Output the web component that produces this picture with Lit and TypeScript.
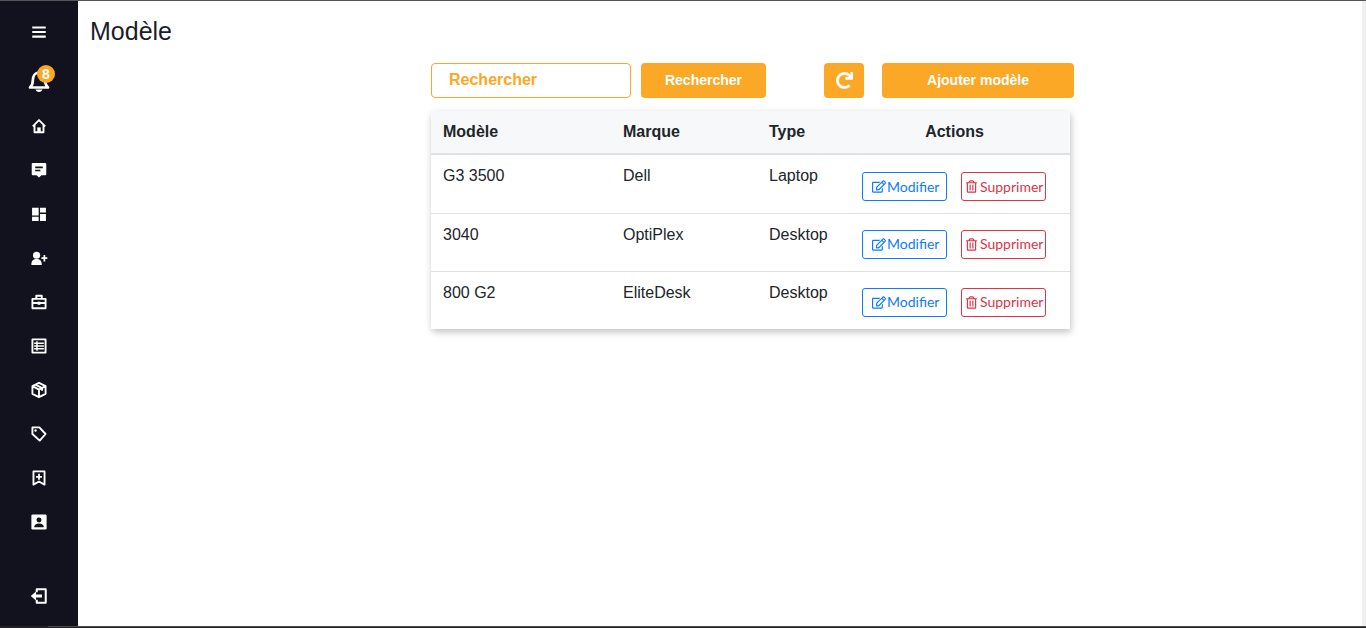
import { LitElement, css, html, svg } from 'lit';
import { customElement } from 'lit/decorators.js';

const icon = (body: unknown, size = 18, viewBox = '-1 -1 26 26') => html`
  <svg width=${size} height=${size} viewBox=${viewBox} fill="currentColor">${body}</svg>
`;

const outline = (d: string) => svg`<path d=${d} fill="none" stroke="currentColor" stroke-width="2.7" stroke-linejoin="round" />`;

const navIcons = [
  svg`<path d="M3 4.500h18v2.700H3zM3 10.700h18v2.700H3zM3 16.800h18v2.700H3z" />`,
  svg`${outline('M3 12.500 12 3.500l9 9M5.500 10v11h13V10')}<path d="M9.500 14h5v7h-5z" />`,
  svg`<path d="M3 2h18a1.500 1.500 0 0 1 1.500 1.500v14.500a1.500 1.500 0 0 1-1.500 1.500h-5.500L12 23l-3.500-3.500H3A1.500 1.500 0 0 1 1.500 18V3.500A1.500 1.500 0 0 1 3 2z" /><path d="M6.500 7h11v2.300h-11zM6.500 11.500h7.500v2.300H6.500z" fill="#11121e" />`,
  svg`<path d="M2 3h9.500v11H2zM13.500 3H22v7h-8.500zM2 16h9.500v6H2zM13.500 12H22v10h-8.500z" />`,
  svg`<circle cx="8.500" cy="8" r="5.200" /><path d="M1 21c0-5 3-7.500 7.500-7.500S16 16 16 21v1H1zM18.500 7.500h2.500V11h3v2.500h-3V17h-2.500v-3.500h-3V11h3z" />`,
  svg`${outline('M2.500 7.500h19v13.500h-19zM8 7.500V3h8v4.500M2.500 13.500h19')}<path d="M10 11.500h4v4.500h-4z" />`,
  svg`${outline('M2.500 2.500h19v19h-19z')}<path d="M5 7h14v2.200H5zM5 11h14v2.200H5zM5 15h14v2.200H5zM8 5h2.200v14H8z" />`,
  svg`${outline('M12 1.800 21.500 6.500v11L12 22.200 2.500 17.500v-11zM2.500 6.500 12 11.500l9.500-5M12 11.500v10.500M7 4.200l9.500 5v4')}`,
  svg`${outline('M2.500 2.500h10l9 9.500-8.500 9.500-10.500-9.500z')}<circle cx="7" cy="7" r="1.700" />`,
  svg`${outline('M4 2.500h16v19l-8-4.500-8 4.500z')}<path d="M10.700 6h2.600v3h3v2.600h-3v3h-2.600v-3h-3V9h3z" />`,
  svg`<path d="M3 1h18a2 2 0 0 1 2 2v18a2 2 0 0 1-2 2H3a2 2 0 0 1-2-2V3a2 2 0 0 1 2-2z" /><circle cx="12" cy="9" r="3.600" fill="#11121e" /><path d="M5 19.500c0-3.500 3-5.500 7-5.500s7 2 7 5.500z" fill="#11121e" />`,
];

const bell = svg`${outline('M3 19.500c2-1.800 2.800-3.500 2.800-7 0-4.500 2.400-8 6.200-8s6.200 3.500 6.200 8c0 3.500.8 5.200 2.800 7z')}<path d="M8.500 21.500h7c-.5 1.500-1.800 2.400-3.500 2.400s-3-.9-3.500-2.400z" />`;

const logout = svg`${outline('M9 7V3h12v18H9v-4')}<path d="M1 12 8 6v4h8v4H8v4z" />`;

const refresh = svg`<path stroke="currentColor" stroke-width="14" d="M500.33 0h-47.41a12 12 0 0 0-12 12.570l4 82.760A247.420 247.420 0 0 0 256 8C119.340 8 8.900 119.530 8 256.190 7.100 393.070 117.680 504 256 504a247.100 247.100 0 0 0 166.180-63.910 12 12 0 0 0 .48-17.430l-34-34a12 12 0 0 0-16.380-.55A176 176 0 1 1 402.100 157.800l-101.530-4.870a12 12 0 0 0-12.570 12v47.410a12 12 0 0 0 12 12h200.330a12 12 0 0 0 12-12V12a12 12 0 0 0-12-12z" />`;

const editIcon = svg`<path d="M402.3 344.900l32-32c5-5 13.700-1.500 13.700 5.700V464c0 26.500-21.500 48-48 48H48c-26.500 0-48-21.500-48-48V112c0-26.500 21.500-48 48-48h273.500c7.100 0 10.700 8.600 5.700 13.700l-32 32c-1.500 1.500-3.500 2.300-5.700 2.300H48v352h352V350.500c0-2.100.8-4.100 2.300-5.600zm156.600-201.800L296.300 405.700l-90.400 10c-26.200 2.900-48.500-19.200-45.600-45.600l10-90.400L432.900 17.100c22.900-22.900 59.900-22.900 82.700 0l43.200 43.200c22.900 22.900 22.900 60 .1 82.800zM460.100 174L402 115.900 216.200 301.800l-7.300 65.300 65.300-7.300L460.100 174zm64.800-79.700l-43.200-43.200c-4.100-4.100-10.800-4.100-14.800 0L436 82l58.100 58.100 30.900-30.900c4-4.200 4-10.800-.1-14.900z" />`;

const trashIcon = svg`<path d="M268 416h24a12 12 0 0 0 12-12V188a12 12 0 0 0-12-12h-24a12 12 0 0 0-12 12v216a12 12 0 0 0 12 12zM432 80h-82.410l-34-56.700A48 48 0 0 0 274.410 0H173.590a48 48 0 0 0-41.160 23.300L98.410 80H16A16 16 0 0 0 0 96v16a16 16 0 0 0 16 16h16v336a48 48 0 0 0 48 48h288a48 48 0 0 0 48-48V128h16a16 16 0 0 0 16-16V96a16 16 0 0 0-16-16zM171.840 50.910A6 6 0 0 1 177 48h94a6 6 0 0 1 5.150 2.910L293.610 80H154.390zM368 464H80V128h288zm-212-48h24a12 12 0 0 0 12-12V188a12 12 0 0 0-12-12h-24a12 12 0 0 0-12 12v216a12 12 0 0 0 12 12z" />`;

const rows = [
  ['G3 3500', 'Dell', 'Laptop'],
  ['3040', 'OptiPlex', 'Desktop'],
  ['800 G2', 'EliteDesk', 'Desktop'],
];

@customElement('app-root')
export class AppRoot extends LitElement {
  static styles = css`
    :host {
      display: flex;
      flex-direction: column;
      height: 628px;
      overflow: hidden;
      background: #fff;
      color: #212529;
      font-family: 'Liberation Sans', Arial, sans-serif;
      border-top: 1px solid #555;
      box-sizing: border-box;
    }

    .frame {
      flex: 1;
      display: flex;
      min-height: 0;
    }

    .sidebar {
      width: 78px;
      flex: none;
      box-sizing: border-box;
      background: #11121e;
      color: #fff;
      display: flex;
      flex-direction: column;
      align-items: center;
      padding: 9px 0 8px;
    }

    .nav-item {
      position: relative;
      height: 44px;
      display: flex;
      align-items: center;
      justify-content: center;
    }

    .menu {
      margin-bottom: 6px;
    }

    .logout {
      margin-top: auto;
    }

    .badge {
      position: absolute;
      top: 5px;
      left: 10px;
      width: 18px;
      height: 18px;
      border-radius: 50%;
      background: #faa826;
      color: #fff;
      font-size: 14px;
      font-weight: 700;
      line-height: 18px;
      text-align: center;
    }

    .content {
      flex: 1;
      min-width: 0;
      padding: 16px 12px 0;
      border-right: 4px solid #f0f0f0;
    }

    h1 {
      margin: 0;
      font-size: 25px;
      font-weight: 400;
      line-height: 29px;
      color: #1c1c2b;
    }

    .panel {
      width: 643px;
      margin: 17px 0 0 341px;
    }

    .toolbar {
      display: flex;
      align-items: stretch;
      height: 35px;
    }

    .search {
      width: 200px;
      box-sizing: border-box;
      border: 1px solid #faa826;
      border-radius: 4px;
      padding: 0 17px;
      font: 700 16px/31px 'Liberation Sans', Arial, sans-serif;
      color: #faa826;
    }

    .btn {
      box-sizing: border-box;
      padding-bottom: 2px;
      border-radius: 4px;
      background: #faa826;
      color: #fff;
      font-size: 14px;
      font-weight: 700;
      display: flex;
      align-items: center;
      justify-content: center;
    }

    .btn-search {
      width: 125px;
      margin-left: 10px;
    }

    .btn-refresh {
      width: 40px;
      margin-left: 58px;
      padding-bottom: 1px;
    }

    .btn-add {
      width: 192px;
      margin-left: 18px;
    }

    .card {
      width: 639px;
      margin-top: 13px;
      box-shadow: 1px 3px 7px rgba(0, 0, 0, 0.24);
    }

    table {
      width: 100%;
      border-collapse: collapse;
      table-layout: fixed;
      font-size: 16px;
    }

    th {
      height: 42px;
      padding: 0 12px;
      background: #f6f8fa;
      border-bottom: 2px solid #dee2e6;
      text-align: left;
      font-weight: 700;
      box-sizing: content-box;
    }

    th.actions {
      text-align: center;
    }

    td {
      height: 58px;
      padding: 12px 12px 0;
      border-top: 1px solid #dee2e6;
      vertical-align: top;
      box-sizing: border-box;
      line-height: 18px;
    }

    tr:first-child td {
      border-top: 0;
      height: 59px;
    }

    .cell-actions {
      padding: 0;
    }

    .action-row {
      display: flex;
      gap: 14px;
      padding: 16px 0 0 23px;
    }

    tr:first-child .action-row {
      padding-top: 17px;
    }

    .action {
      width: 85px;
      height: 29px;
      box-sizing: border-box;
      border: 1px solid currentColor;
      border-radius: 3px;
      font: 14px/1 Lato, sans-serif;
      display: flex;
      align-items: center;
      white-space: nowrap;
    }

    .edit {
      color: #0d7bfd;
      padding-left: 9px;
      gap: 1px;
    }

    .delete {
      color: #dc3545;
      padding-left: 4px;
      gap: 3px;
    }

    .strip {
      height: 2px;
      flex: none;
      background: linear-gradient(#4a4a4a, #4a4a4a) 48px 0 / 100% 1px no-repeat, #222;
    }
  `;

  render() {
    return html`
      <div class="frame">
        <nav class="sidebar">
          <div class="nav-item menu">${icon(navIcons[0], 18, '0 0 24 24')}</div>
          <div class="nav-item">
            ${icon(bell, 24, '0 2 24 24')}
            <span class="badge">8</span>
          </div>
          ${navIcons.slice(1).map((body) => html`<div class="nav-item">${icon(body)}</div>`)}
          <div class="nav-item logout">${icon(logout, 18, '0 0 24 24')}</div>
        </nav>
        <main class="content">
          <h1>Modèle</h1>
          <div class="panel">
            <div class="toolbar">
              <div class="search">Rechercher</div>
              <div class="btn btn-search">Rechercher</div>
              <div class="btn btn-refresh">
                <svg width="17" height="17" viewBox="0 0 512 512" fill="currentColor">${refresh}</svg>
              </div>
              <div class="btn btn-add">Ajouter modèle</div>
            </div>
            <div class="card">
              <table>
                <colgroup>
                  <col style="width: 180px" />
                  <col style="width: 146px" />
                  <col style="width: 82px" />
                  <col />
                </colgroup>
                <thead>
                  <tr>
                    <th>Modèle</th>
                    <th>Marque</th>
                    <th>Type</th>
                    <th class="actions">Actions</th>
                  </tr>
                </thead>
                <tbody>
                  ${rows.map(
                    (row) => html`
                      <tr>
                        ${row.map((cell) => html`<td>${cell}</td>`)}
                        <td class="cell-actions">
                          <div class="action-row">
                            <div class="action edit">
                              <svg width="14" height="13" viewBox="0 0 576 512" fill="currentColor">${editIcon}</svg>Modifier
                            </div>
                            <div class="action delete">
                              <svg width="11" height="13" viewBox="0 0 448 512" fill="currentColor">${trashIcon}</svg>Supprimer
                            </div>
                          </div>
                        </td>
                      </tr>
                    `,
                  )}
                </tbody>
              </table>
            </div>
          </div>
        </main>
      </div>
      <div class="strip"></div>
    `;
  }
}
